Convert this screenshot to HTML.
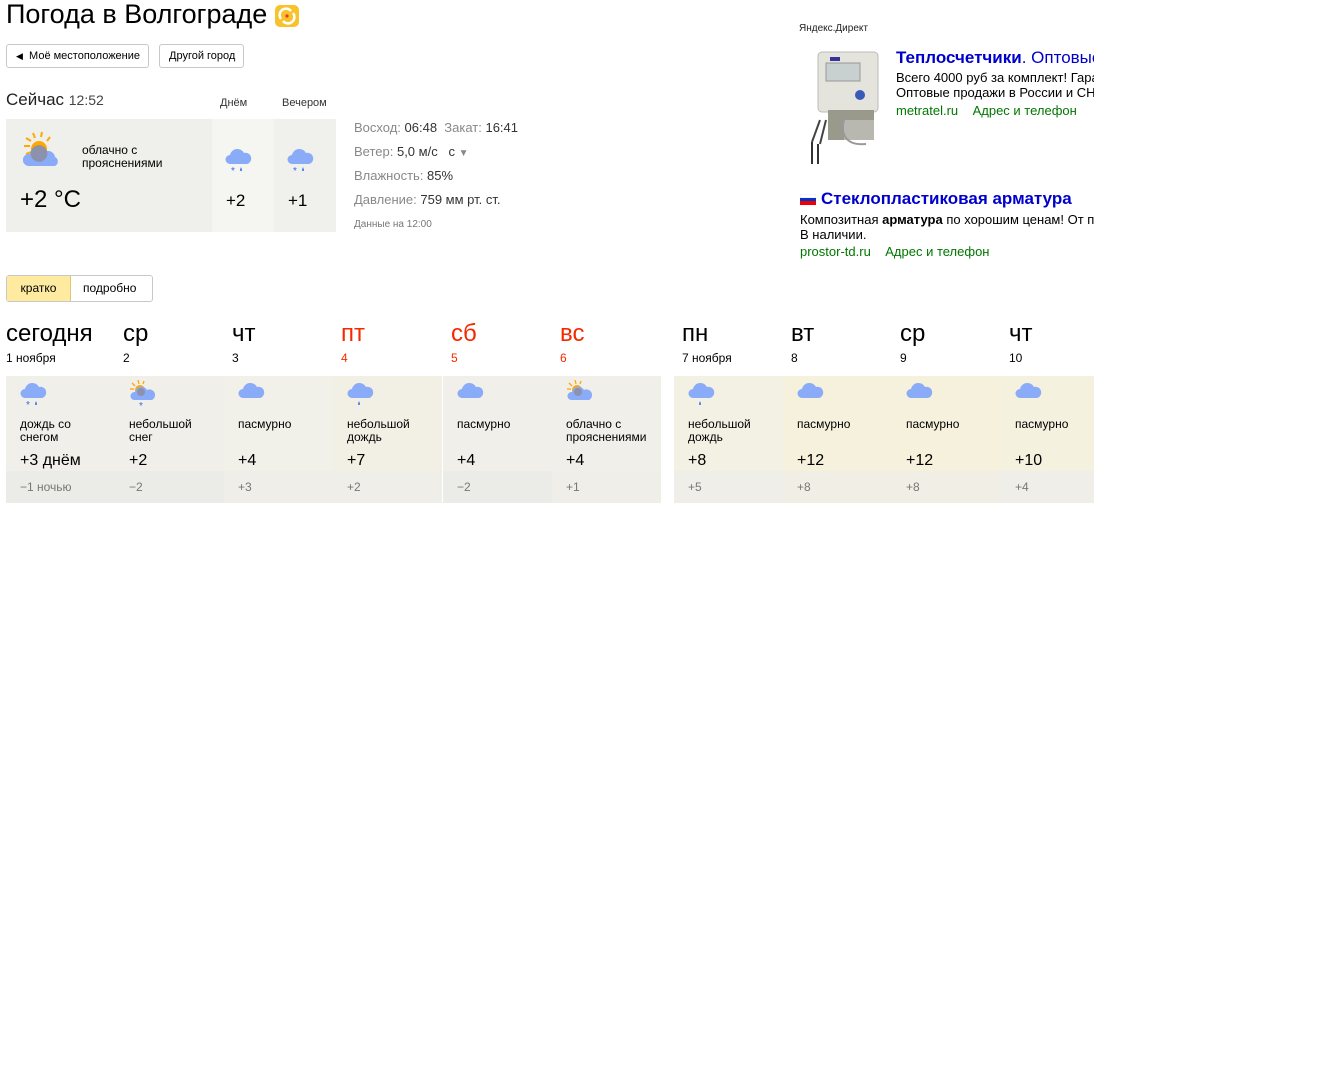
<!DOCTYPE html>
<html><head><meta charset="utf-8">
<style>
*{margin:0;padding:0;box-sizing:border-box}
body{width:1328px;height:1084px;background:#fff;font-family:"Liberation Sans",Arial,sans-serif;color:#000;position:relative;overflow:hidden}
.a{position:absolute;white-space:nowrap}
.btn{position:absolute;white-space:nowrap;border:1px solid #c8c8c8;border-radius:3px;font-size:11px;height:24px;line-height:22px;padding:0 9px;background:#fff}
.col{position:absolute;top:376px;width:109px;height:127px}
.col .t{position:absolute;left:0;top:0;width:109px;height:95px}
.col .b{position:absolute;left:0;top:95px;width:109px;height:32px}
.col .ic{position:absolute;left:14px;top:6px}
.col .d{position:absolute;left:14px;top:42px;font-size:12px;line-height:13px;color:#000;white-space:nowrap}
.col .h{position:absolute;left:14px;top:76px;font-size:16px;white-space:nowrap}
.col .n{position:absolute;left:14px;top:104px;font-size:12px;color:#777;white-space:nowrap}
.day{position:absolute;top:320px;font-size:24px}
.dt{position:absolute;top:351px;font-size:12px;white-space:nowrap}
.red{color:#f32a00}
</style></head><body>

<div class="a" style="left:6px;top:-1px;font-size:27px;line-height:30px">Погода в Волгограде</div>
<svg class="a" style="left:275px;top:5px" width="24" height="22" viewBox="0 0 24 22"><rect x="0" y="0" width="24" height="22" rx="5" fill="#f8c22a"/><path d="M6 14a6 6 0 0 1 10-8" stroke="#fff" stroke-width="2.5" fill="none"/><path d="M18 8a6 6 0 0 1-10 8" stroke="#fff" stroke-width="2.5" fill="none"/><circle cx="12" cy="11" r="1.6" fill="#e33"/></svg>

<div class="btn" style="left:6px;top:44px;width:143px"><span style="font-size:9px">◀</span>&nbsp; Моё местоположение</div>
<div class="btn" style="left:159px;top:44px;width:85px">Другой город</div>

<div class="a" style="left:6px;top:90px;font-size:17px;color:#222">Сейчас <span style="font-size:14px;color:#444">12:52</span></div>
<div class="a" style="left:220px;top:97px;font-size:11px;color:#333">Днём</div>
<div class="a" style="left:282px;top:97px;font-size:11px;color:#333">Вечером</div>

<div class="a" style="left:6px;top:119px;width:206px;height:113px;background:#efefeb"></div>
<div class="a" style="left:212px;top:119px;width:62px;height:113px;background:#f5f5f2"></div>
<div class="a" style="left:274px;top:119px;width:62px;height:113px;background:#f0f0ec"></div>

<svg class="a" style="left:20px;top:130px" width="48" height="38" viewBox="0 0 48 38">
<g stroke="#ffa800" stroke-width="2"><line x1="4" y1="16" x2="10" y2="16"/><line x1="6" y1="8" x2="11" y2="11"/><line x1="13" y1="3" x2="15" y2="8"/><line x1="22" y1="2" x2="21" y2="7"/><line x1="30" y1="7" x2="27" y2="11"/><line x1="6" y1="24" x2="11" y2="22"/></g>
<circle cx="19" cy="19" r="8" fill="#ffa800"/>
<path d="M8 36a6 6 0 0 1 2-12a9 9 0 0 1 17-3a7 7 0 0 1 8 6a5 5 0 0 1 0 9z" fill="#8aabf7"/>
<path d="M11 26a8 8 0 0 1 16-5a8 8 0 0 1-16 5z" fill="#8c8c9a" opacity=".8"/>
</svg>
<div class="a" style="left:82px;top:144px;font-size:12px;line-height:13px">облачно с<br>прояснениями</div>
<div class="a" style="left:20px;top:186px;font-size:24px">+2 °C</div>

<svg class="a" style="left:225px;top:148px" width="28" height="26" viewBox="0 0 28 26"><path d="M5 16a4.5 4.5 0 0 1 0-9a7.5 7.5 0 0 1 14-2a5.5 5.5 0 0 1 3 11z" fill="#8aabf7"/><text x="6" y="26" font-size="10" fill="#2e6cf0" font-family="Liberation Sans">*</text><path d="M16 19l-1 3a1 1 0 0 0 2 0z" fill="#2e6cf0"/></svg>
<svg class="a" style="left:287px;top:148px" width="28" height="26" viewBox="0 0 28 26"><path d="M5 16a4.5 4.5 0 0 1 0-9a7.5 7.5 0 0 1 14-2a5.5 5.5 0 0 1 3 11z" fill="#8aabf7"/><text x="6" y="26" font-size="10" fill="#2e6cf0" font-family="Liberation Sans">*</text><path d="M16 19l-1 3a1 1 0 0 0 2 0z" fill="#2e6cf0"/></svg>
<div class="a" style="left:226px;top:191px;font-size:17px">+2</div>
<div class="a" style="left:288px;top:191px;font-size:17px">+1</div>

<div class="a" style="left:354px;top:120px;font-size:13px;color:#888">Восход: <span style="color:#333">06:48</span> &nbsp;Закат: <span style="color:#333">16:41</span></div>
<div class="a" style="left:354px;top:144px;font-size:13px;color:#888">Ветер: <span style="color:#333">5,0 м/с &nbsp; с</span> <span style="font-size:10px">▼</span></div>
<div class="a" style="left:354px;top:168px;font-size:13px;color:#888">Влажность: <span style="color:#333">85%</span></div>
<div class="a" style="left:354px;top:192px;font-size:13px;color:#888">Давление: <span style="color:#333">759 мм рт. ст.</span></div>
<div class="a" style="left:354px;top:219px;font-size:10px;color:#777">Данные на 12:00</div>

<!-- ads -->
<div class="a" style="left:799px;top:23px;font-size:10px;color:#222">Яндекс.Директ</div>
<svg class="a" style="left:806px;top:50px" width="76" height="118" viewBox="0 0 76 118">
<rect x="12" y="2" width="60" height="60" rx="4" fill="#e4e4dd" stroke="#bbb"/>
<rect x="24" y="7" width="10" height="4" fill="#339"/>
<rect x="20" y="13" width="34" height="18" fill="#c8d0d0" stroke="#999"/>
<circle cx="54" cy="45" r="5" fill="#3a5ab8"/>
<rect x="22" y="60" width="46" height="30" fill="#9a9a8c"/>
<rect x="38" y="70" width="30" height="20" fill="#b8b8b0"/>
<path d="M14 70l-8 22M20 70l-6 24" stroke="#444" stroke-width="2"/>
<path d="M6 92v22M12 94v20" stroke="#333" stroke-width="2"/>
<path d="M40 64c-8 20 0 32 20 30" stroke="#999" stroke-width="2" fill="none"/>
</svg>
<div class="a" style="left:896px;top:48px;font-size:17px;color:#0000cc;width:198px;overflow:hidden"><b>Теплосчетчики</b>. Оптовые</div>
<div class="a" style="left:896px;top:70px;font-size:13px;line-height:15px;color:#000;width:198px;overflow:hidden">Всего 4000 руб за комплект! Гарантия<br>Оптовые продажи в России и СНГ</div>
<div class="a" style="left:896px;top:103px;font-size:13px;color:#070">metratel.ru &nbsp;&nbsp; Адрес и телефон</div>

<svg class="a" style="left:800px;top:194px" width="16" height="11"><rect width="16" height="4" fill="#fff" stroke="#ddd" stroke-width=".5"/><rect y="4" width="16" height="4" fill="#0033cc"/><rect y="7" width="16" height="4" fill="#e00"/></svg>
<div class="a" style="left:821px;top:189px;font-size:17px;color:#0000cc;font-weight:bold">Стеклопластиковая арматура</div>
<div class="a" style="left:800px;top:212px;font-size:13px;line-height:15px;color:#000;width:294px;overflow:hidden">Композитная <b>арматура</b> по хорошим ценам! От производителя<br>В наличии.</div>
<div class="a" style="left:800px;top:244px;font-size:13px;color:#070">prostor-td.ru &nbsp;&nbsp; Адрес и телефон</div>

<!-- tabs -->
<div class="a" style="left:6px;top:275px;width:147px;height:27px;border:1px solid #c8c8c8;border-radius:3px;font-size:12px;line-height:25px">
<span style="position:absolute;left:0;top:0;width:64px;height:25px;background:#ffeba0;border-right:1px solid #d8c87a;text-align:center">кратко</span>
<span style="position:absolute;left:76px;top:0">подробно</span></div>

<!-- days -->
<div class="day" style="left:6px">сегодня</div><div class="dt" style="left:6px">1 ноября</div>
<div class="day" style="left:123px">ср</div><div class="dt" style="left:123px">2</div>
<div class="day" style="left:232px">чт</div><div class="dt" style="left:232px">3</div>
<div class="day red" style="left:341px">пт</div><div class="dt red" style="left:341px">4</div>
<div class="day red" style="left:451px">сб</div><div class="dt red" style="left:451px">5</div>
<div class="day red" style="left:560px">вс</div><div class="dt red" style="left:560px">6</div>
<div class="day" style="left:682px">пн</div><div class="dt" style="left:682px">7 ноября</div>
<div class="day" style="left:791px">вт</div><div class="dt" style="left:791px">8</div>
<div class="day" style="left:900px">ср</div><div class="dt" style="left:900px">9</div>
<div class="day" style="left:1009px">чт</div><div class="dt" style="left:1009px">10</div>

<div class="a" style="left:661px;top:370px;width:13px;height:140px;background:#fff;z-index:2"></div>
<div class="a" style="left:1094px;top:370px;width:234px;height:140px;background:#fff;z-index:2"></div>

<div class="col" style="left:6px"><div class="t" style="background:#f0efe9"></div><div class="b" style="background:#ebebe8"></div>
<svg class="ic" width="28" height="26" viewBox="0 0 28 26"><path d="M5 16a4.5 4.5 0 0 1 0-9a7.5 7.5 0 0 1 14-2a5.5 5.5 0 0 1 3 11z" fill="#8aabf7"/><text x="6" y="26" font-size="10" fill="#2e6cf0" font-family="Liberation Sans">*</text><path d="M16 19l-1 3a1 1 0 0 0 2 0z" fill="#2e6cf0"/></svg>
<div class="d">дождь со<br>снегом</div><div class="h">+3 днём</div><div class="n">−1 ночью</div></div>
<div class="col" style="left:115px"><div class="t" style="background:#f0efe9"></div><div class="b" style="background:#ebebe8"></div>
<svg class="ic" style="top:4px" width="30" height="28" viewBox="0 0 30 28"><g stroke="#ffa800" stroke-width="1.3"><line x1="1" y1="9" x2="5" y2="9"/><line x1="3" y1="3" x2="6" y2="6"/><line x1="9" y1="0" x2="10" y2="4"/><line x1="15" y1="1" x2="14" y2="4"/></g><circle cx="11" cy="10" r="5" fill="#ffa800"/><path d="M5 20a4 4 0 0 1 1-8a6.5 6.5 0 0 1 12-2a5 5 0 0 1 5 10z" fill="#8aabf7"/><circle cx="12" cy="12" r="4" fill="#8c8c9a" opacity=".8"/><text x="10" y="29" font-size="10" fill="#2e6cf0" font-family="Liberation Sans">*</text></svg>
<div class="d">небольшой<br>снег</div><div class="h">+2</div><div class="n">−2</div></div>
<div class="col" style="left:224px"><div class="t" style="background:#f1f0e9"></div><div class="b" style="background:#efeee9"></div>
<svg class="ic" width="28" height="26" viewBox="0 0 28 26"><path d="M5 16a4.5 4.5 0 0 1 0-9a7.5 7.5 0 0 1 14-2a5.5 5.5 0 0 1 3 11z" fill="#8aabf7"/></svg>
<div class="d">пасмурно</div><div class="h">+4</div><div class="n">+3</div></div>
<div class="col" style="left:333px"><div class="t" style="background:#f2f0e5"></div><div class="b" style="background:#efeee9"></div>
<svg class="ic" width="28" height="26" viewBox="0 0 28 26"><path d="M5 16a4.5 4.5 0 0 1 0-9a7.5 7.5 0 0 1 14-2a5.5 5.5 0 0 1 3 11z" fill="#8aabf7"/><path d="M12 19l-1 3a1 1 0 0 0 2 0z" fill="#2e6cf0"/></svg>
<div class="d">небольшой<br>дождь</div><div class="h">+7</div><div class="n">+2</div></div>
<div class="col" style="left:443px"><div class="t" style="background:#f0efe9"></div><div class="b" style="background:#ebebe8"></div>
<svg class="ic" width="28" height="26" viewBox="0 0 28 26"><path d="M5 16a4.5 4.5 0 0 1 0-9a7.5 7.5 0 0 1 14-2a5.5 5.5 0 0 1 3 11z" fill="#8aabf7"/></svg>
<div class="d">пасмурно</div><div class="h">+4</div><div class="n">−2</div></div>
<div class="col" style="left:552px"><div class="t" style="background:#f0efe9"></div><div class="b" style="background:#efeee9"></div>
<svg class="ic" style="top:4px" width="30" height="28" viewBox="0 0 30 28"><g stroke="#ffa800" stroke-width="1.3"><line x1="1" y1="9" x2="5" y2="9"/><line x1="3" y1="3" x2="6" y2="6"/><line x1="9" y1="0" x2="10" y2="4"/><line x1="15" y1="1" x2="14" y2="4"/></g><circle cx="11" cy="10" r="5" fill="#ffa800"/><path d="M5 20a4 4 0 0 1 1-8a6.5 6.5 0 0 1 12-2a5 5 0 0 1 5 10z" fill="#8aabf7"/><circle cx="12" cy="12" r="4" fill="#8c8c9a" opacity=".8"/></svg>
<div class="d">облачно с<br>прояснениями</div><div class="h">+4</div><div class="n">+1</div></div>
<div class="col" style="left:674px"><div class="t" style="background:#f3f0e4"></div><div class="b" style="background:#efeee9"></div>
<svg class="ic" width="28" height="26" viewBox="0 0 28 26"><path d="M5 16a4.5 4.5 0 0 1 0-9a7.5 7.5 0 0 1 14-2a5.5 5.5 0 0 1 3 11z" fill="#8aabf7"/><path d="M12 19l-1 3a1 1 0 0 0 2 0z" fill="#2e6cf0"/></svg>
<div class="d">небольшой<br>дождь</div><div class="h">+8</div><div class="n">+5</div></div>
<div class="col" style="left:783px"><div class="t" style="background:#f5f1dc"></div><div class="b" style="background:#f1efe5"></div>
<svg class="ic" width="28" height="26" viewBox="0 0 28 26"><path d="M5 16a4.5 4.5 0 0 1 0-9a7.5 7.5 0 0 1 14-2a5.5 5.5 0 0 1 3 11z" fill="#8aabf7"/></svg>
<div class="d">пасмурно</div><div class="h">+12</div><div class="n">+8</div></div>
<div class="col" style="left:892px"><div class="t" style="background:#f5f1dc"></div><div class="b" style="background:#f1efe5"></div>
<svg class="ic" width="28" height="26" viewBox="0 0 28 26"><path d="M5 16a4.5 4.5 0 0 1 0-9a7.5 7.5 0 0 1 14-2a5.5 5.5 0 0 1 3 11z" fill="#8aabf7"/></svg>
<div class="d">пасмурно</div><div class="h">+12</div><div class="n">+8</div></div>
<div class="col" style="left:1001px"><div class="t" style="background:#f4f1df"></div><div class="b" style="background:#efeee9"></div>
<svg class="ic" width="28" height="26" viewBox="0 0 28 26"><path d="M5 16a4.5 4.5 0 0 1 0-9a7.5 7.5 0 0 1 14-2a5.5 5.5 0 0 1 3 11z" fill="#8aabf7"/></svg>
<div class="d">пасмурно</div><div class="h">+10</div><div class="n">+4</div></div>

</body></html>
